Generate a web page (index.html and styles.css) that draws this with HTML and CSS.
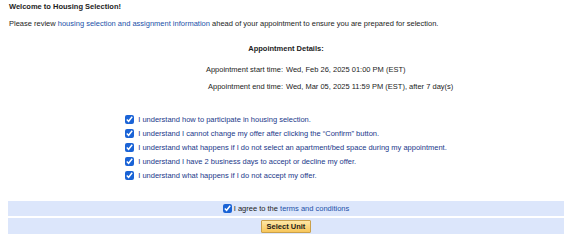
FILE: index.html
```html
<!DOCTYPE html>
<html>
<head>
<meta charset="utf-8">
<link rel="stylesheet" href="styles.css">
</head>
<body>
<div class="page">
  <div class="title">Welcome to Housing Selection!</div>
  <p class="intro">Please review <a href="#" class="link">housing selection and assignment information</a> ahead of your appointment to ensure you are prepared for selection.</p>
  <div class="details-title">Appointment Details:</div>
  <table class="times">
    <tr><td class="lbl">Appointment start time:</td><td class="val">Wed, Feb 26, 2025 01:00 PM (EST)</td></tr>
    <tr><td class="lbl">Appointment end time:</td><td class="val">Wed, Mar 05, 2025 11:59 PM (EST), after 7 day(s)</td></tr>
  </table>
  <div class="checks-wrap">
    <ul class="checks">
      <li><input type="checkbox" checked><span>I understand how to participate in housing selection.</span></li>
      <li><input type="checkbox" checked><span>I understand I cannot change my offer after clicking the “Confirm” button.</span></li>
      <li><input type="checkbox" checked><span>I understand what happens if I do not select an apartment/bed space during my appointment.</span></li>
      <li><input type="checkbox" checked><span>I understand I have 2 business days to accept or decline my offer.</span></li>
      <li><input type="checkbox" checked><span>I understand what happens if I do not accept my offer.</span></li>
    </ul>
  </div>
  <div class="bar agree"><input type="checkbox" checked><span>I agree to the <a href="#" class="link">terms and conditions</a></span></div>
  <div class="bar action"><button class="btn">Select Unit</button></div>
</div>
</body>
</html>
```

FILE: styles.css
```css
html, body {
  margin: 0;
  padding: 0;
  background: #ffffff;
}
.page {
  padding: 2px 13px 0 8px;
  font-family: "Liberation Sans", Arial, sans-serif;
  font-size: 7.5px;
  color: #1c1c1c;
}
.title {
  font-weight: bold;
  line-height: 10px;
  padding-left: 1px;
}
.intro {
  margin: 7px 0 0 1px;
  line-height: 10px;
}
.link {
  color: #2150a8;
  text-decoration: none;
}
.details-title {
  margin-top: 15px;
  text-align: center;
  font-weight: bold;
  line-height: 10px;
}
.times {
  width: 100%;
  border-collapse: collapse;
  margin-top: 7px;
  font-size: 7.5px;
  color: #1c1c1c;
}
.times td {
  padding: 0;
  height: 17px;
  line-height: 10px;
  width: 50%;
}
.times .lbl {
  text-align: right;
  padding-right: 3px;
}
.times .val {
  text-align: left;
}
.checks-wrap {
  display: flex;
  justify-content: center;
  margin-top: 17px;
}
.checks {
  list-style: none;
  margin: 0;
  padding: 0;
  color: #22388a;
}
.checks li {
  display: flex;
  align-items: center;
  height: 14px;
}
input[type="checkbox"] {
  width: 9px;
  height: 9px;
  margin: 0 4px 0 0;
  accent-color: #1a63d6;
}
.bar {
  background: #dce6fb;
  display: flex;
  align-items: center;
  justify-content: center;
}
.agree {
  margin-top: 19px;
  height: 15px;
}
.agree input {
  margin-right: 2px;
}
.action {
  margin-top: 2px;
  height: 16px;
}
.btn {
  font-family: "Liberation Sans", Arial, sans-serif;
  font-size: 7.5px;
  font-weight: bold;
  color: #1a1a1a;
  background: linear-gradient(#fde7a6, #f7c65a);
  border: 1px solid #caa04a;
  border-radius: 1px;
  padding: 0 5px;
  height: 13px;
  line-height: 11px;
}
```
